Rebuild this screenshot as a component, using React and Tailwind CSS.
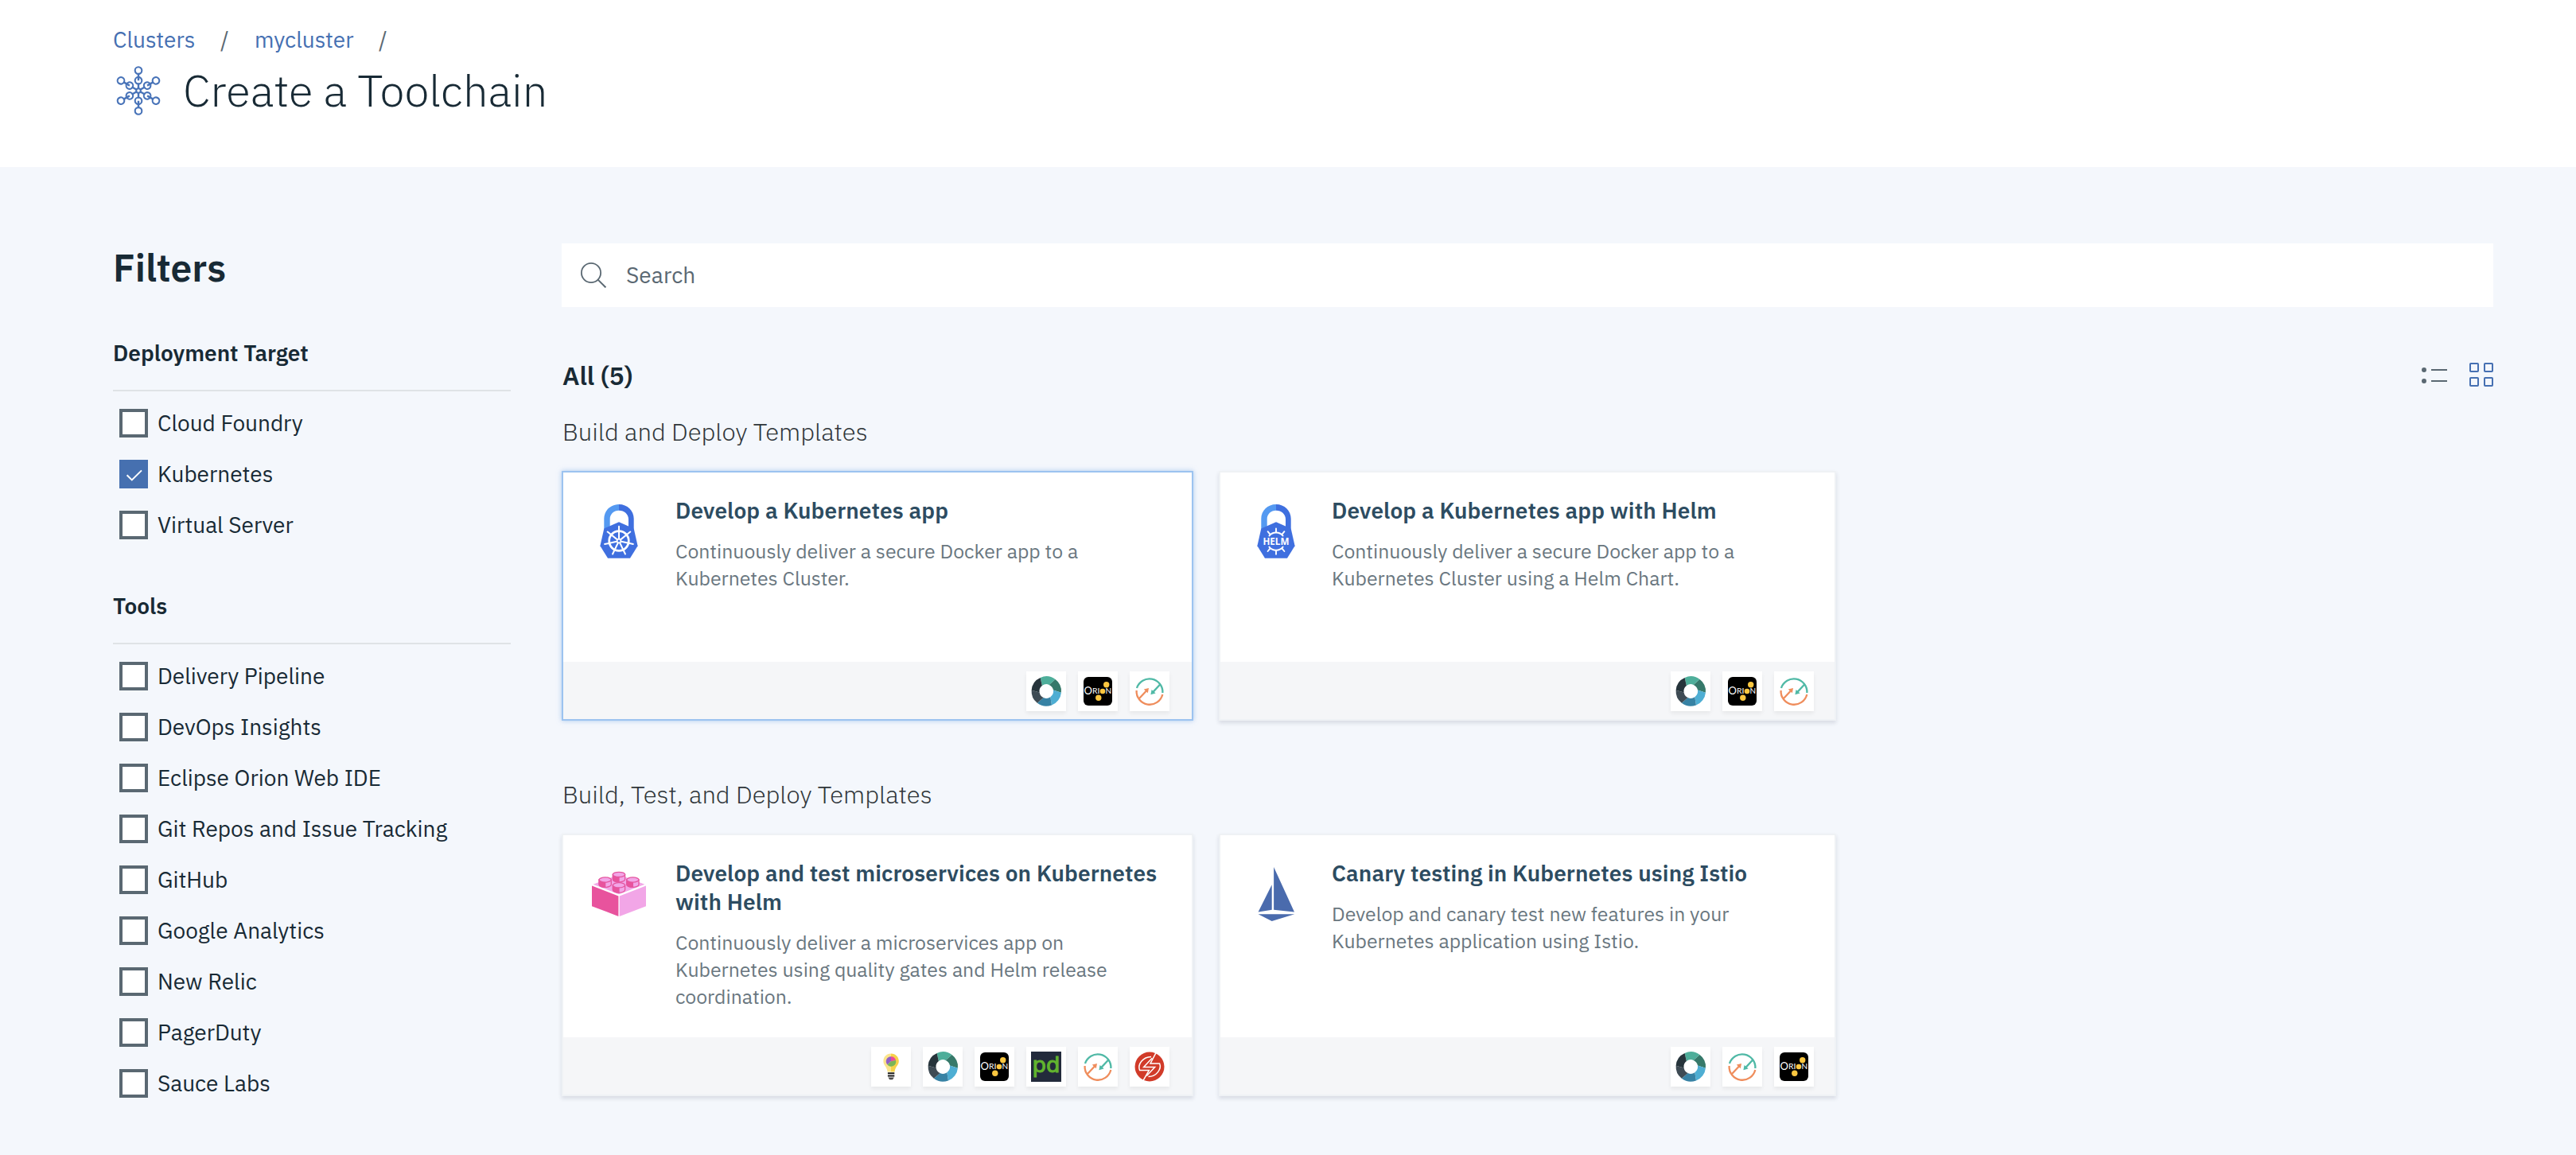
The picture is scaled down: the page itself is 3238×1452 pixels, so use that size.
import React from "react";

const deploymentTargets = [
  { label: "Cloud Foundry" },
  { label: "Kubernetes", checked: true },
  { label: "Virtual Server" },
];

const tools = [
  "Delivery Pipeline",
  "DevOps Insights",
  "Eclipse Orion Web IDE",
  "Git Repos and Issue Tracking",
  "GitHub",
  "Google Analytics",
  "New Relic",
  "PagerDuty",
  "Sauce Labs",
].map((label) => ({ label }));

function polar(cx, cy, r, deg) {
  const a = (deg * Math.PI) / 180;
  return [(cx + r * Math.cos(a)).toFixed(2), (cy + r * Math.sin(a)).toFixed(2)];
}

/* ---------- page icons ---------- */

function ClusterIcon() {
  const angles = [-90, -30, 30, 90, 150, 210];
  return (
    <svg className="h-[64px] w-[60px]" viewBox="-30 -32 60 64" fill="none" stroke="#4873b8" strokeWidth="2.1">
      <circle r="2.8" />
      {angles.map((a) => (
        <g key={a} transform={`rotate(${a})`}>
          <circle cx="12.8" cy="0" r="4.3" />
          <circle cx="25.4" cy="0" r="4.3" />
          <path d="M2.6 0H9.6M12.8 0H21.2" strokeWidth="2.4" />
        </g>
      ))}
    </svg>
  );
}

function SearchIcon() {
  return (
    <svg className="h-8 w-8" viewBox="0 0 32 32" fill="none" stroke="#5a6872" strokeWidth="1.8">
      <circle cx="13" cy="13" r="12.1" />
      <path d="M21.6 21.6L31.4 31.4" strokeWidth="2" />
    </svg>
  );
}

function ListIcon() {
  return (
    <svg className="h-[30px] w-8" viewBox="0 0 32 30" fill="#5a6872">
      <circle cx="3" cy="9" r="3" />
      <circle cx="3" cy="23" r="3" />
      <path d="M12 8H32V10H12ZM12 22H32V24H12Z" />
    </svg>
  );
}

function GridIcon() {
  return (
    <svg className="size-[30px]" viewBox="0 0 30 30" fill="none" stroke="#4670b2" strokeWidth="2">
      <rect x="1" y="1" width="10" height="10" rx="0.8" />
      <rect x="19" y="1" width="10" height="10" rx="0.8" />
      <rect x="1" y="19" width="10" height="10" rx="0.8" />
      <rect x="19" y="19" width="10" height="10" rx="0.8" />
    </svg>
  );
}

/* ---------- template icons, 68 x 68 ---------- */

function LockBody() {
  return (
    <>
      <path d="M34 0C23.4 0 15.3 8.2 15.3 18V31L22.7 29V18.5C22.7 12.4 27.6 7.8 34 7.8Z" fill="#5499f1" />
      <path d="M34 0C44.6 0 52.7 8.2 52.7 18V31L46 29V18.5C46 12.4 40.6 7.8 34 7.8Z" fill="#3f6fdf" />
      <path d="M34 22.2L52.7 30.4L57.6 52.2L48 67.8H20L10.4 52.2L15.3 30.4Z" fill="#3f6fdf" />
    </>
  );
}

const spokes = [0, 1, 2, 3, 4, 5, 6].map((i) => -90 + (i * 360) / 7);

function KubernetesLock() {
  return (
    <svg className="size-[68px]" viewBox="0 0 68 68">
      <LockBody />
      <g transform="translate(34 46)" stroke="#fff" fill="none" strokeLinecap="round">
        <circle r="12.3" strokeWidth="2.7" />
        {spokes.map((a) => (
          <path key={a} d="M3 0H18.3" strokeWidth="2" transform={`rotate(${a})`} />
        ))}
        <circle r="3.2" fill="#fff" stroke="none" />
        <circle r="1.5" fill="#3f6fdf" stroke="none" />
      </g>
    </svg>
  );
}

function HelmLock() {
  const ticks = [-90, -50, -130, 90, 50, 130];
  return (
    <svg className="size-[68px]" viewBox="0 0 68 68">
      <LockBody />
      <g transform="translate(34 46.6)" stroke="#fff" fill="none" strokeWidth="1.9" strokeLinecap="round">
        <path d="M-8.6 -7A11.1 11.1 0 0 1 8.6 -7M-8.6 7A11.1 11.1 0 0 0 8.6 7" />
        {ticks.map((a) => (
          <path key={a} d="M11.5 0H16.2" transform={`rotate(${a})`} />
        ))}
      </g>
      <text x="17.4" y="51.2" textLength="33" lengthAdjust="spacingAndGlyphs" fill="#fff" className="font-['Open_Sans',sans-serif] text-[12px] font-bold">
        HELM
      </text>
    </svg>
  );
}

function Stud({ x, y }) {
  return (
    <g transform={`translate(${x} ${y})`} stroke="#e5559f" strokeWidth="1.3">
      <path d="M-7.6 0V6C-7.6 8 -4 9.4 0 9.4C4 9.4 7.6 8 7.6 6V0Z" fill="#f2a6e7" />
      <path d="M-7.6 0V6C-7.6 8 -4 9.4 0 9.4V2Z" fill="#e8539d" />
      <ellipse rx="7.6" ry="3.1" fill="#f2a6e7" />
    </g>
  );
}

function Brick() {
  return (
    <svg className="size-[68px]" viewBox="0 0 68 68">
      <path d="M0 23.6L33.4 36.4V62L0 49.2Z" fill="#e8539d" />
      <path d="M68 23.6L34.7 36.4V62L68 49.2Z" fill="#f2a6e7" />
      <path d="M1.6 21.8L34 9.5L66.4 21.8L34 34.2Z" fill="#f2a6e7" />
      <Stud x={34} y={9.4} />
      <Stud x={16.7} y={16} />
      <Stud x={51.4} y={16} />
      <Stud x={34} y={22.8} />
    </svg>
  );
}

function Sailboat() {
  return (
    <svg className="size-[68px]" viewBox="0 0 68 68" fill="#4a6bad">
      <path d="M31.1 0L57 56.6L31.1 53.8Z" />
      <path d="M28.7 22.3V53.8L11.6 56.6Z" />
      <path d="M11.6 59.2H57.2L28.7 68Z" />
    </svg>
  );
}

/* ---------- toolchain badges, 50 x 50 ---------- */

const ringColors = [
  ["#4eae9a", -114, -53],
  ["#36796a", -53, 5],
  ["#4eaed3", 5, 69],
  ["#3782a4", 69, 128],
  ["#3e4b54", 128, 184],
  ["#26343b", 184, 246],
];

function Pipeline() {
  return (
    <svg viewBox="0 0 50 50">
      {ringColors.map(([fill, a, b]) => {
        const p1 = polar(25.3, 25, 18.7, a);
        const p2 = polar(25.3, 25, 18.7, b);
        const p3 = polar(25.3, 25, 8.8, b - 14);
        const p4 = polar(25.3, 25, 8.8, a - 14);
        return <path key={fill} fill={fill} d={`M${p1}A18.7 18.7 0 0 1 ${p2}L${p3}A8.8 8.8 0 0 0 ${p4}Z`} />;
      })}
    </svg>
  );
}

function Orion() {
  return (
    <svg viewBox="0 0 50 50">
      <rect x="7" y="7" width="36" height="36" rx="6" fill="#000" />
      <g fill="#fff" className="font-['Lato',sans-serif]">
        <text x="7.6" y="28.6" className="text-[13px]">O</text>
        <text x="18" y="28.4" textLength="9.4" lengthAdjust="spacingAndGlyphs" className="text-[10px]">RI</text>
        <text x="34.6" y="28.4" className="text-[10px]">N</text>
      </g>
      <g fill="#fbc740">
        <circle cx="35.7" cy="16.8" r="3.7" />
        <circle cx="31" cy="25" r="3.3" />
        <circle cx="25.8" cy="33.3" r="3.7" />
      </g>
    </svg>
  );
}

function Tracker() {
  return (
    <svg viewBox="0 0 50 50" fill="none" strokeWidth="2.3">
      <g stroke="#50b9a6">
        <path d="M9 21A16.6 16.6 0 0 1 41.4 27" />
        <path d="M38.6 16L29 26.4" />
        <path d="M26.4 29.2L27.6 23L32.6 27.6Z" fill="#50b9a6" stroke="none" />
      </g>
      <g stroke="#ef8d5c">
        <path d="M8.6 24A16.6 16.6 0 0 0 41.3 29" />
        <path d="M11.8 34.3L21.4 24" />
        <path d="M24 21L22.8 27.2L17.8 22.6Z" fill="#ef8d5c" stroke="none" />
      </g>
    </svg>
  );
}

function Bulb() {
  return (
    <svg viewBox="0 0 50 50">
      <path d="M25 8.5C19 8.5 15.4 13 15.4 18C15.4 23.5 20 25 20.6 31.4H25Z" fill="#fbe48c" />
      <path d="M25 8.5C31 8.5 34.8 13 34.8 18C34.8 23.5 30 25 29.6 31.4H25Z" fill="#f6d24a" />
      <path d="M25 18.3L25 12.2A6.1 6.1 0 0 0 20.4 22.4Z" fill="#8f60c6" />
      <path d="M25 18.3L25 12.2A6.1 6.1 0 0 1 31 17Z" fill="#e94a9d" />
      <path d="M25 18.3L31 17A6.1 6.1 0 0 1 20.4 22.4Z" fill="#7ab558" />
      <path d="M20.9 32.2H29.3V34.3H20.9ZM20.9 35.4H29.3V37.4H20.9Z" fill="#1b1b1b" />
      <path d="M21.4 38.4H28.8L27 41.2H23.2Z" fill="#4c4c4c" />
    </svg>
  );
}

function PagerDuty() {
  return (
    <svg viewBox="0 0 50 50">
      <rect x="6" y="6" width="38" height="38" fill="#222a3b" />
      <text x="7.4" y="31.8" textLength="35" lengthAdjust="spacingAndGlyphs" fill="#62b42e" stroke="#62b42e" strokeWidth="1" className="font-['DejaVu_Sans',sans-serif] text-[26px]">
        pd
      </text>
    </svg>
  );
}

function Sauce() {
  return (
    <svg viewBox="0 0 50 50">
      <circle cx="25" cy="25" r="18.5" fill="#d13b29" />
      <g fill="none" stroke="#fff" strokeWidth="1.5">
        <path d="M33 7.6L26 21H37.6C40.5 28 33.5 37.4 23.5 37.6" />
        <path d="M17 42.4L24.4 29.4H12.6C9.6 22 16.5 12.6 27 12.4" />
        <path d="M28.2 14.2L17.6 25.6H31.6L21.4 36.4" />
      </g>
    </svg>
  );
}

/* ---------- building blocks ---------- */

function Checkbox({ label, checked }) {
  return (
    <label className="flex h-16 items-center gap-3 pl-2">
      {checked ? (
        <span className="flex size-9 items-center justify-center bg-[#4670b0]">
          <svg className="size-9" viewBox="0 0 36 36" fill="none" stroke="#fff" strokeWidth="2">
            <path d="M9.6 19.2L15.8 25.4L28 13.4" />
          </svg>
        </span>
      ) : (
        <span className="size-9 border-4 border-[#5a6872] bg-white" />
      )}
      <span className="pb-px text-[28px] leading-[37px]">{label}</span>
    </label>
  );
}

function FilterGroup({ title, items }) {
  return (
    <section>
      <h3 className="border-b-2 border-[#dfe3e6] pb-7 text-[28px] leading-[37px] font-semibold">{title}</h3>
      <div className="pt-2">
        {items.map((item) => (
          <Checkbox key={item.label} {...item} />
        ))}
      </div>
    </section>
  );
}

function Card({ icon, title, text, badges, width, height, selected, iconColumn, badgeInset }) {
  return (
    <article
      className={`flex flex-col border-2 bg-white ${width} ${height} ${
        selected
          ? "border-[#9cc3f0] shadow-[0_0_6px_rgba(120,170,230,0.6)]"
          : "border-[#eff2f5] shadow-[0_3px_5px_rgba(40,50,80,0.14)]"
      }`}
    >
      <div className="flex flex-1 pl-9">
        <div className={`pt-10 ${iconColumn}`}>{icon}</div>
        <div className="w-[608px] pt-[29.5px]">
          <h4 className="text-[28px] leading-[36px] font-semibold tracking-[0.1px] text-[#2d4c61]">{title}</h4>
          <p className="mt-[16.5px] text-[24.8px] leading-[34px] text-[#6a7780]">{text}</p>
        </div>
      </div>
      <div className={`flex h-[72px] justify-end gap-[15px] bg-[#f5f6f8] pt-3 ${badgeInset}`}>
        {badges.map((badge, i) => (
          <span key={i} className="size-[50px] bg-white shadow-[0_3px_5px_rgba(0,0,0,0.06)]">
            {badge}
          </span>
        ))}
      </div>
    </article>
  );
}

export default function App() {
  return (
    <div className="min-h-[1452px] bg-[#f4f7fc] font-['IBM_Plex_Sans','Roboto',sans-serif] text-[#182a35]">
      <header className="h-[210px] bg-white pt-[31px] pl-[142px]">
        <nav className="flex text-[28px] leading-[37px] text-[#4670b2]">
          <a className="w-[135px]">Clusters</a>
          <span className="w-[43px] text-[#5a6872]">/</span>
          <a className="w-[156px]">mycluster</a>
          <span className="text-[#5a6872]">/</span>
        </nav>
        <div className="mt-[5px] flex items-start">
          <div className="flex w-[88px] pt-[9px] pl-0.5">
            <ClusterIcon />
          </div>
          <h1 className="pt-1 text-[56px] leading-[72px] font-light">Create a Toolchain</h1>
        </div>
      </header>

      <div className="flex pr-[104px] pl-[142px]">
        <aside className="w-[500px] pt-[95px]">
          <h2 className="text-[48px] leading-[62px] font-semibold">Filters</h2>
          <div className="mt-[58px] flex flex-col gap-[51px]">
            <FilterGroup title="Deployment Target" items={deploymentTargets} />
            <FilterGroup title="Tools" items={tools} />
          </div>
        </aside>

        <main className="ml-16 flex-1 pt-24">
          <div className="flex h-20 items-center gap-[25px] bg-white pl-6">
            <SearchIcon />
            <span className="pb-px text-[28px] leading-[37px] tracking-[0.1px] text-[#5a6872]">Search</span>
          </div>

          <div className="mt-[65px] flex justify-between pl-px">
            <h2 className="text-[32px] leading-[42px] font-semibold">All (5)</h2>
            <div className="flex gap-7 pt-[5px]">
              <ListIcon />
              <GridIcon />
            </div>
          </div>

          <h3 className="mt-[29px] pl-px text-[31px] leading-[41px] font-light text-[#30363a]">
            Build and Deploy Templates
          </h3>
          <div className="mt-[29px] flex gap-8">
            <Card
              selected
              width="w-[794px]"
              height="h-[314px]"
              iconColumn="w-[105px]"
              icon={<KubernetesLock />}
              title="Develop a Kubernetes app"
              text="Continuously deliver a secure Docker app to a Kubernetes Cluster."
              badges={[<Pipeline />, <Orion />, <Tracker />]}
              badgeInset="pr-7"
            />
            <Card
              width="w-[776px]"
              height="h-[314px]"
              iconColumn="w-[104px]"
              icon={<HelmLock />}
              title="Develop a Kubernetes app with Helm"
              text="Continuously deliver a secure Docker app to a Kubernetes Cluster using a Helm Chart."
              badges={[<Pipeline />, <Orion />, <Tracker />]}
              badgeInset="pr-[26px]"
            />
          </div>

          <h3 className="mt-[72px] pl-px text-[31px] leading-[41px] font-light text-[#30363a]">
            Build, Test, and Deploy Templates
          </h3>
          <div className="mt-[29px] flex gap-8">
            <Card
              width="w-[794px]"
              height="h-[330px]"
              iconColumn="w-[105px]"
              icon={<Brick />}
              title="Develop and test microservices on Kubernetes with Helm"
              text="Continuously deliver a microservices app on Kubernetes using quality gates and Helm release coordination."
              badges={[<Bulb />, <Pipeline />, <Orion />, <PagerDuty />, <Tracker />, <Sauce />]}
              badgeInset="pr-7"
            />
            <Card
              width="w-[776px]"
              height="h-[330px]"
              iconColumn="w-[104px]"
              icon={<Sailboat />}
              title="Canary testing in Kubernetes using Istio"
              text="Develop and canary test new features in your Kubernetes application using Istio."
              badges={[<Pipeline />, <Tracker />, <Orion />]}
              badgeInset="pr-[26px]"
            />
          </div>
        </main>
      </div>
    </div>
  );
}
